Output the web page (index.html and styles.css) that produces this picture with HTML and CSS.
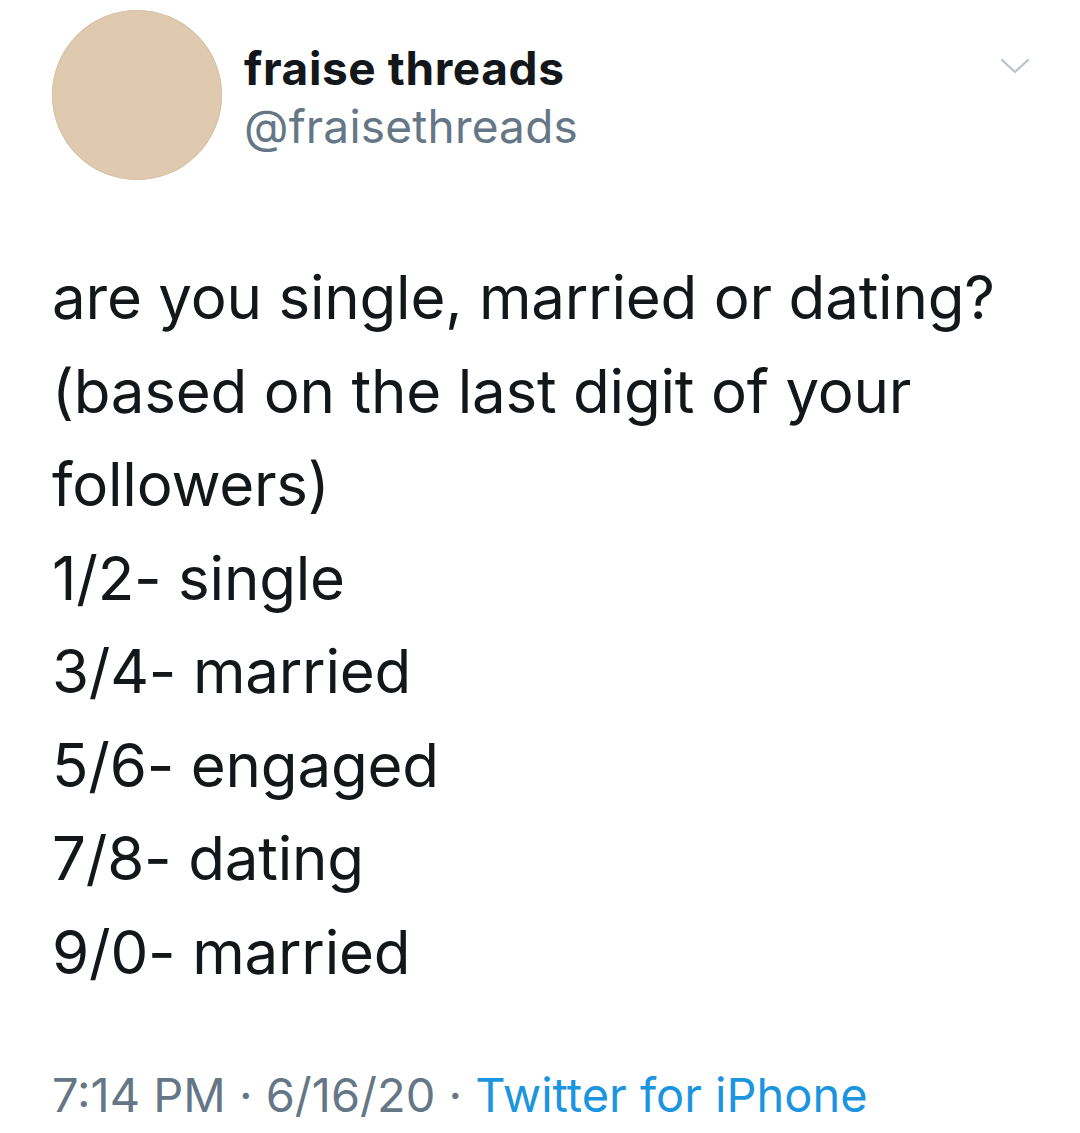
FILE: index.html
```html
<!DOCTYPE html>
<html>
<head>
<meta charset="utf-8">
<link rel="stylesheet" href="styles.css">
</head>
<body>
<div class="tweet">
  <div class="header">
    <div class="avatar"></div>
    <div class="names">
      <div class="name">fraise threads</div>
      <div class="handle">@fraisethreads</div>
    </div>
    <svg class="chevron" width="30" height="18" viewBox="0 0 30 18"><path d="M2 3 L15 15 L28 3" fill="none" stroke="#b8c2ca" stroke-width="2.2" stroke-linecap="round" stroke-linejoin="round"/></svg>
  </div>
  <div class="text">are you single, married or dating?<br>(based on the last digit of your<br>followers)<br>1/2- single<br>3/4- married<br>5/6- engaged<br>7/8- dating<br>9/0- married</div>
  <div class="meta"><span class="gray">7:14 PM · 6/16/20 · </span><span class="blue">Twitter for iPhone</span></div>
</div>
</body>
</html>
```
FILE: styles.css
```css
html, body { margin: 0; padding: 0; background: #fff; }
body { width: 1080px; height: 1133px; overflow: hidden; font-family: Inter, "Noto Sans", sans-serif; }
.tweet { padding: 10px 0 0 52px; }
.header { display: flex; align-items: flex-start; height: 170px; }
.avatar { width: 170px; height: 170px; border-radius: 50%; background: #dfcab0; box-shadow: inset 0 0 0 1px #d6c1a6; flex: none; }
.names { margin-left: 22px; padding-top: 29px; flex: 1; }
.name { font-size: 46px; font-weight: 700; color: #14171a; line-height: 59px; letter-spacing: 0.6px; }
.handle { font-size: 46px; color: #657786; line-height: 56px; letter-spacing: 0.2px; }
.chevron { margin: 47px 50px 0 0; }
.text { margin-top: 71px; font-size: 60px; line-height: 93.5px; color: #14171a; letter-spacing: -0.2px; }
.meta { margin-top: 68px; font-size: 47px; line-height: 56px; }
.gray { color: #657786; }
.blue { color: #1b95e0; }
```
